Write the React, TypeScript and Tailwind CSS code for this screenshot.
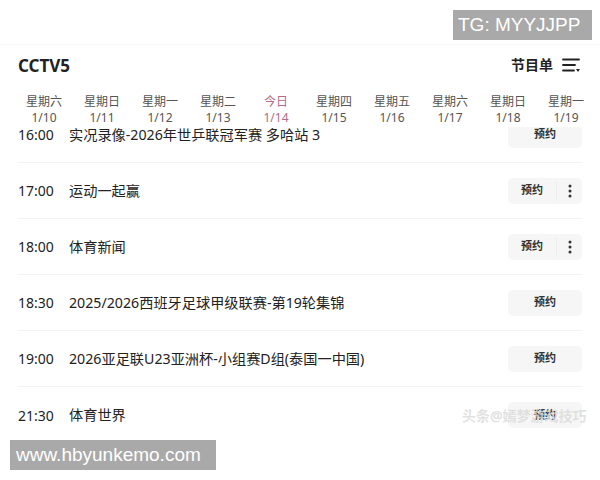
import React from "react";

type Day = { week: string; date: string; today?: boolean };
type Program = { time: string; title: string; more?: boolean };

const days: Day[] = [
  { week: "星期六", date: "1/10" },
  { week: "星期日", date: "1/11" },
  { week: "星期一", date: "1/12" },
  { week: "星期二", date: "1/13" },
  { week: "今日", date: "1/14", today: true },
  { week: "星期四", date: "1/15" },
  { week: "星期五", date: "1/16" },
  { week: "星期六", date: "1/17" },
  { week: "星期日", date: "1/18" },
  { week: "星期一", date: "1/19" },
];

const programs: Program[] = [
  { time: "16:00", title: "实况录像-2026年世乒联冠军赛 多哈站 3" },
  { time: "17:00", title: "运动一起赢", more: true },
  { time: "18:00", title: "体育新闻", more: true },
  { time: "18:30", title: "2025/2026西班牙足球甲级联赛-第19轮集锦" },
  { time: "19:00", title: "2026亚足联U23亚洲杯-小组赛D组(泰国一中国)" },
  { time: "21:30", title: "体育世界" },
];

function ListIcon() {
  return (
    <svg width="18" height="16" viewBox="0 0 18 16" fill="none">
      <path d="M1 2.5H17" stroke="#222" strokeWidth="1.8" strokeLinecap="round" />
      <path d="M1 8H13" stroke="#222" strokeWidth="1.8" strokeLinecap="round" />
      <path d="M1 13.5H12" stroke="#222" strokeWidth="1.8" strokeLinecap="round" />
      <path d="M14 12H18L16 15Z" fill="#222" />
    </svg>
  );
}

function DotsIcon() {
  return (
    <svg width="4" height="14" viewBox="0 0 4 14">
      <circle cx="2" cy="2" r="1.5" fill="#333" />
      <circle cx="2" cy="7" r="1.5" fill="#333" />
      <circle cx="2" cy="12" r="1.5" fill="#333" />
    </svg>
  );
}

export default function App() {
  return (
    <div
      className="relative w-[600px] h-[480px] bg-white overflow-hidden text-[#222]"
      style={{ fontFamily: '"Noto Sans", "Noto Sans CJK SC", sans-serif' }}
    >
      {/* 页面 */}
      <div className="mt-[44px] border-t border-[#f7f7f7]">
        {/* 标题 */}
        <div className="flex items-center justify-between h-[24px] mt-[9px] pl-[18px] pr-[20px]">
          <div className="text-[17px] font-bold leading-[24px]">CCTV5</div>
          <div className="flex items-center gap-[9px] -mt-[3px]">
            <span className="text-[14px] font-bold leading-[20px]">节目单</span>
            <ListIcon />
          </div>
        </div>

        {/* 日期 */}
        <div className="relative z-10 bg-white grid grid-cols-10 w-[580px] ml-[15px] mt-[16px] pb-[1px]">
          {days.map((d, i) => (
            <div
              key={i}
              className={`flex flex-col items-center text-[12px] leading-[16px] ${
                d.today ? "text-[#b46a86]" : "text-[#555]"
              }`}
            >
              <span>{d.week}</span>
              <span>{d.date}</span>
            </div>
          ))}
        </div>

        {/* 节目列表 */}
        <div className="-mt-[20px]">
          {programs.map((p, i) => (
            <div
              key={i}
              className="flex items-center h-[56px] mx-[18px] border-b border-[#f3f3f3] last:border-b-0"
            >
              <span className="w-[51px] text-[14px] text-[#222]">{p.time}</span>
              <span className="flex-1 text-[14.2px] text-[#222]">{p.title}</span>
              {p.more ? (
                <div className="flex items-center w-[74px] h-[26px] rounded-[5px] bg-[#f6f6f6]">
                  <span className="w-[48px] text-center text-[11px] font-bold text-[#333]">预约</span>
                  <span className="w-px h-[20px] bg-[#ececec]" />
                  <span className="flex-1 flex justify-center">
                    <DotsIcon />
                  </span>
                </div>
              ) : (
                <div className="flex items-center justify-center w-[74px] h-[26px] rounded-[5px] bg-[#f6f6f6] text-[11px] font-bold text-[#333]">
                  预约
                </div>
              )}
            </div>
          ))}
        </div>
      </div>

      {/* 水印 */}
      <div
        className="absolute top-[10px] left-[453px] w-[139px] h-[30px] bg-[#a9a9a9] text-white text-[19px] leading-[30px] pl-[5px]"
        style={{ fontFamily: '"Liberation Sans", Arial, sans-serif' }}
      >
        TG: MYYJJPP
      </div>
      <div className="absolute top-[405px] left-[462px] text-[14px] font-bold text-[#dadada]/80 whitespace-nowrap">
        头条@嫣梦游戏技巧
      </div>
      <div
        className="absolute top-[440px] left-[10px] w-[206px] h-[30px] bg-[#a9a9a9] text-white text-[19px] leading-[30px] pl-[6px]"
        style={{ fontFamily: '"Liberation Sans", Arial, sans-serif' }}
      >
        www.hbyunkemo.com
      </div>
    </div>
  );
}
